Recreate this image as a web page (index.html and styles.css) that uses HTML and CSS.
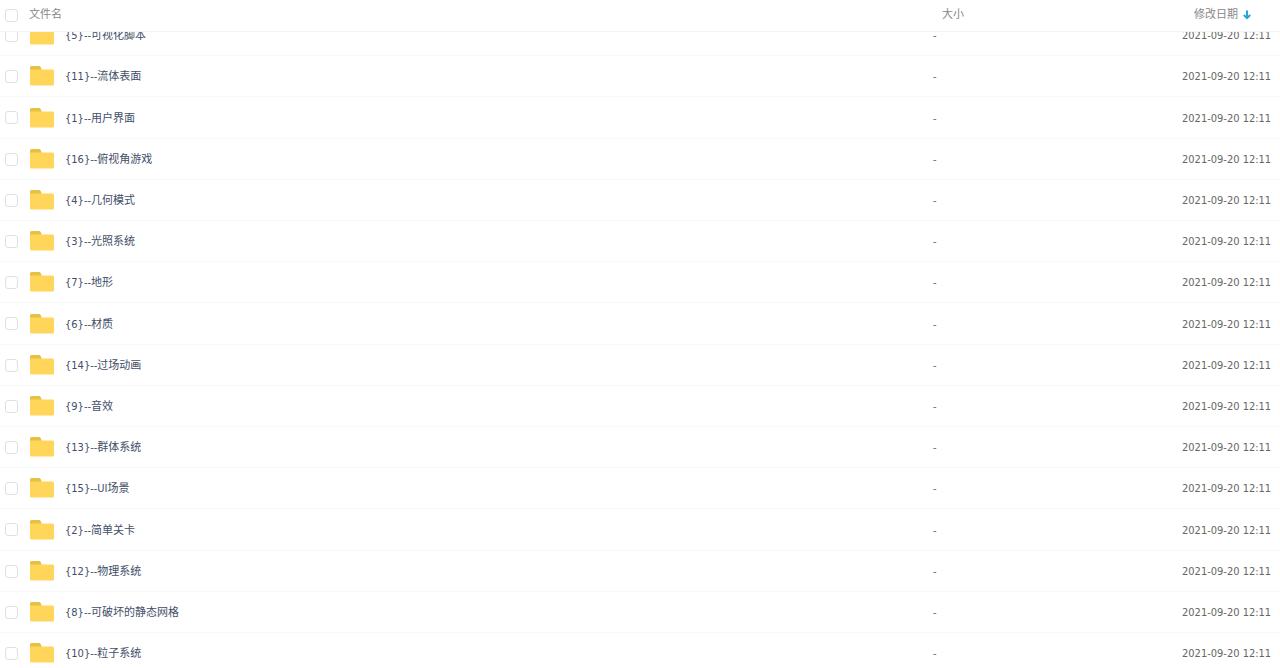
FILE: index.html
```html
<!DOCTYPE html>
<html lang="zh-CN">
<head>
<meta charset="utf-8">
<title>文件列表</title>
<link rel="stylesheet" href="styles.css">
</head>
<body>
<svg class="sprite" aria-hidden="true">
  <symbol id="folder" viewBox="0 0 24 20">
    <path fill="#e6bf45" d="M0 8V1.5Q0 0 1.500 0H9q1 0 1.500 .8L11.500 3V8z"/>
    <path fill="#ffd659" d="M0 3.500H22.500Q24 3.500 24 5V18Q24 19.500 22.500 19.500H1.500Q0 19.500 0 18z"/>
  </symbol>
</svg>
<main class="scroller" id="scroller">
<table class="files">
<thead>
<tr>
<th class="check"><input type="checkbox" aria-label="全选"></th>
<th class="name">文件名</th>
<th class="size">大小</th>
<th class="date"><button type="button" class="sort">修改日期<svg class="arrow" viewBox="0 0 8 10" aria-hidden="true"><path d="M4 .5V8.500M.8 5L4 8.200L7.200 5" fill="none" stroke="#2ba3d4" stroke-width="2"/></svg></button></th>
</tr>
</thead>
<tbody id="rows"></tbody>
</table>
</main>
<script src="files.js"></script>
</body>
</html>
```
FILE: styles.css
```css
body {
  margin: 0;
  background: #fff;
  font-family: "DejaVu Sans Condensed", "Noto Sans CJK SC", sans-serif;
  font-size: 11px;
  line-height: 16px;
  color: #666;
}

.sprite {
  position: absolute;
  width: 0;
  height: 0;
}

.scroller {
  height: 100vh;
  overflow-y: auto;
  scrollbar-width: none;
}

.files {
  width: 100%;
  table-layout: fixed;
  border-collapse: separate;
  border-spacing: 0;
}

.files th,
.files td {
  box-sizing: border-box;
  height: 41px;
  padding: 0;
  border-bottom: 1px solid #f7f8fa;
  font-weight: normal;
  text-align: left;
  vertical-align: middle;
  white-space: nowrap;
}

.files tbody tr:nth-child(5n + 3) td {
  height: 42px;
}

.files thead th {
  position: sticky;
  top: 0;
  height: 32px;
  background: #fff;
  border-bottom-color: #f2f3f5;
  color: #888;
}

.files thead .name,
.files thead .size,
.files thead .date {
  padding-bottom: 1px;
}

.files .check {
  width: 29px;
  padding-left: 5px;
}

.files .size {
  width: 249px;
}

.files td.size {
  padding: 2px 0 0 1px;
}

.files th.size {
  padding-left: 10px;
}

.files .date {
  width: 99px;
}

.files td.date {
  padding: 2px 0 0 1px;
}

.files th.date {
  padding-left: 13px;
}

input[type="checkbox"] {
  appearance: none;
  display: block;
  box-sizing: border-box;
  width: 13px;
  height: 13px;
  margin: 0;
  border: 1px solid #dfe0e3;
  border-radius: 3px;
  background: #fff;
}

input[type="checkbox"]:checked {
  background: #2ba3d4;
}

.entry {
  display: flex;
  align-items: center;
  gap: 11px;
  padding-left: 1px;
  color: #424e67;
}

.label {
  padding-top: 2px;
}

.folder {
  width: 24px;
  height: 20px;
}

.sort {
  display: flex;
  align-items: center;
  gap: 5px;
  padding: 0;
  border: 0;
  background: none;
  font: inherit;
  color: inherit;
}

.arrow {
  width: 8px;
  height: 10px;
}
```
FILE: files.js
```js
const names = [
  "{5}--可视化脚本", "{11}--流体表面", "{1}--用户界面", "{16}--俯视角游戏",
  "{4}--几何模式", "{3}--光照系统", "{7}--地形", "{6}--材质",
  "{14}--过场动画", "{9}--音效", "{13}--群体系统", "{15}--UI场景",
  "{2}--简单关卡", "{12}--物理系统", "{8}--可破坏的静态网格", "{10}--粒子系统"
];

document.getElementById("rows").innerHTML = names.map((name, i) => `
  <tr>
    <td class="check"><input type="checkbox" id="file-${i}"></td>
    <td class="name"><label class="entry" for="file-${i}"><svg class="folder" aria-hidden="true"><use href="#folder"/></svg><span class="label">${name}</span></label></td>
    <td class="size">-</td>
    <td class="date">2021-09-20 12:11</td>
  </tr>`).join("");

document.getElementById("scroller").scrollTop = 17;
```
